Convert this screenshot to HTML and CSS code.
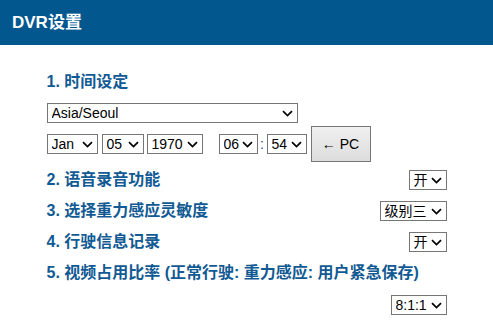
FILE: index.html
```html
<!DOCTYPE html>
<html lang="zh-CN">
<head>
    <meta charset="UTF-8">
    <meta name="viewport" content="width=device-width, initial-scale=1.0">
    <title>DVR设置</title>
    <link rel="stylesheet" href="styles.css">
</head>
<body>
    <div class="header">DVR设置</div>

    <div class="settings">
        <!-- 1. Time -->
        <h3 class="item-title">1. 时间设定</h3>
        <select class="zone-select">
            <option>Asia/Seoul</option>
        </select>
        <div class="date-row">
            <select class="sel-month"><option>Jan</option></select>
            <select class="sel-day"><option>05</option></select>
            <select class="sel-year"><option>1970</option></select>
            <select class="sel-hour"><option>06</option></select>
            <span class="colon">:</span>
            <select class="sel-min"><option>54</option></select>
            <button class="pc-button">&larr; PC</button>
        </div>

        <!-- 2 - 4 -->
        <div class="item-row">
            <h3 class="item-title">2. 语音录音功能</h3>
            <select class="sel-onoff"><option>开</option></select>
        </div>
        <div class="item-row">
            <h3 class="item-title">3. 选择重力感应灵敏度</h3>
            <select class="sel-level"><option>级别三</option></select>
        </div>
        <div class="item-row">
            <h3 class="item-title">4. 行驶信息记录</h3>
            <select class="sel-onoff"><option>开</option></select>
        </div>

        <!-- 5. Ratio -->
        <h3 class="item-title ratio-title">5. 视频占用比率 (正常行驶: 重力感应: 用户紧急保存)</h3>
        <div class="ratio-row">
            <select class="sel-ratio"><option>8:1:1</option></select>
        </div>
    </div>
</body>
</html>
```

FILE: styles.css
```css
/* General */
body {
    margin: 0;
    font-family: "Liberation Sans", Arial, "Noto Sans CJK SC", sans-serif;
    background: #fff;
    color: #000;
}

/* Header bar */
.header {
    height: 45px;
    line-height: 45px;
    padding-left: 12px;
    background-color: #03578f;
    color: #fff;
    font-size: 17px;
    font-weight: bold;
}

/* Settings column */
.settings {
    width: 400px;
    margin: 0 auto;
    padding-top: 27px;
}

.item-title {
    margin: 0;
    font-size: 16px;
    line-height: 20px;
    font-weight: bold;
    color: #125a93;
}

/* Selects with a chevron arrow */
select {
    -webkit-appearance: none;
    appearance: none;
    box-sizing: border-box;
    height: 20px;
    margin: 0;
    padding: 0 18px 0 4px;
    border: 1px solid #767676;
    border-radius: 0;
    background-color: #fff;
    background-image: url("data:image/svg+xml,%3Csvg xmlns='http://www.w3.org/2000/svg' width='11' height='7' viewBox='0 0 11 7'%3E%3Cpath d='M1 1.2 L5.5 5.6 L10 1.2' fill='none' stroke='%23000' stroke-width='1.7'/%3E%3C/svg%3E");
    background-repeat: no-repeat;
    background-position: right 4px center;
    background-size: 11px 7px;
    color: #000;
    font-family: "Liberation Sans", Arial, "Noto Sans CJK SC", sans-serif;
    font-size: 14px;
    line-height: 18px;
}

.zone-select {
    display: block;
    width: 251px;
    margin-top: 11px;
}

/* Date / time row */
.date-row {
    display: flex;
    align-items: center;
    margin-top: 3px;
}

.sel-month { width: 51px; }
.sel-day   { width: 42px; margin-left: 4px; }
.sel-year  { width: 56px; margin-left: 3px; }
.sel-hour  { width: 39px; margin-left: 16px; }
.sel-min   { width: 40px; }

.colon {
    width: 9px;
    text-align: center;
    font-size: 14px;
    color: #125a93;
}

.pc-button {
    width: 60px;
    height: 36px;
    margin-left: 4px;
    border: 1px solid #767676;
    border-radius: 0;
    background: linear-gradient(#f0f0f0, #dcdcdc);
    color: #000;
    font-family: "Liberation Sans", Arial, sans-serif;
    font-size: 14px;
    cursor: pointer;
}

/* Rows with a select on the right */
.item-row {
    display: flex;
    justify-content: space-between;
    align-items: center;
    margin-top: 11px;
}

.date-row + .item-row {
    margin-top: 8px;
}

.sel-onoff { width: 38px; }
.sel-level { width: 67px; }

.ratio-title {
    margin-top: 11px;
}

.ratio-row {
    display: flex;
    justify-content: flex-end;
    margin-top: 12px;
}

.sel-ratio { width: 56px; }
```
